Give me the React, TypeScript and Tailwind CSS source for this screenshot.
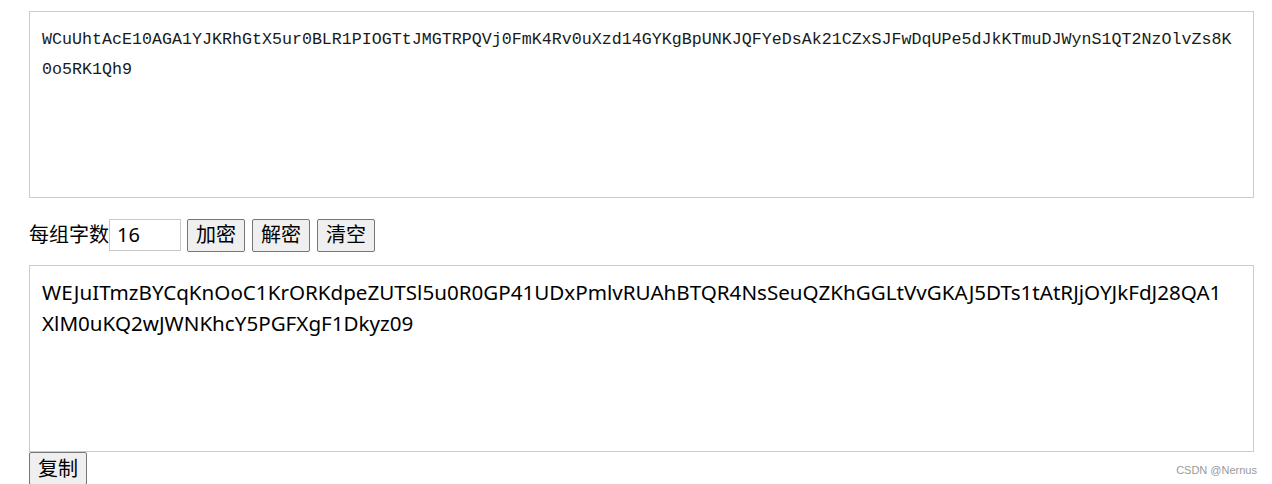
import React from "react";

const cipher = [
  "WCuUhtAcE10AGA1YJKRhGtX5ur0BLR1PIOGTtJMGTRPQVj0FmK4Rv0uXzd14GYKgBpUNKJQFYeDsAk21CZxSJFwDqUPe5dJkKTmuDJWynS1QT2NzOlvZs8K",
  "0o5RK1Qh9",
];
const plain = [
  "WEJuITmzBYCqKnOoC1KrORKdpeZUTSl5u0R0GP41UDxPmlvRUAhBTQR4NsSeuQZKhGGLtVvGKAJ5DTs1tAtRJjOYJkFdJ28QA1",
  "XlM0uKQ2wJWNKhcY5PGFXgF1Dkyz09",
];

const sans = "font-['Noto_Sans','Noto_Sans_CJK_SC',sans-serif]";
const btn =
  "h-[33px] w-[58px] border border-[#767676] rounded-[2px] bg-[#efefef] text-[20px] leading-[26px]";

export default function App() {
  return (
    <div className={`relative w-[1272px] h-[484px] overflow-hidden bg-white pl-[29px] pt-[11px] text-black ${sans}`}>
      {/* top box */}
      <div className="w-[1225px] h-[187px] border border-[#cccccc] px-[12px] pt-[13px] font-['Liberation_Mono',monospace] text-[16.67px] leading-[30px] whitespace-nowrap overflow-hidden text-[#1a1a1a]">
        {cipher.map((l) => (
          <div key={l}>{l}</div>
        ))}
      </div>

      {/* controls */}
      <div className="mt-[20px] h-[34px] flex items-center text-[20px]">
        <span className="leading-[26px]">每组字数</span>
        <div className="w-[72px] h-[32px] border border-[#c8c8c8] flex items-center pl-[7px] text-[20px]">
          16
        </div>
        <button className={`ml-[6px] ${btn}`}>加密</button>
        <button className={`ml-[7px] ${btn}`}>解密</button>
        <button className={`ml-[7px] ${btn}`}>清空</button>
      </div>

      {/* bottom box */}
      <div className="mt-[13px] w-[1225px] h-[187px] border border-[#cccccc] px-[12px] pt-[11px] text-[20.6px] leading-[31px] whitespace-nowrap overflow-hidden">
        {plain.map((l) => (
          <div key={l}>{l}</div>
        ))}
      </div>

      <button className={btn}>复制</button>

      <span className="absolute right-[15px] top-[462px] text-[11px] text-[#999999] font-['Liberation_Sans',sans-serif]">
        CSDN @Nernus
      </span>
    </div>
  );
}
